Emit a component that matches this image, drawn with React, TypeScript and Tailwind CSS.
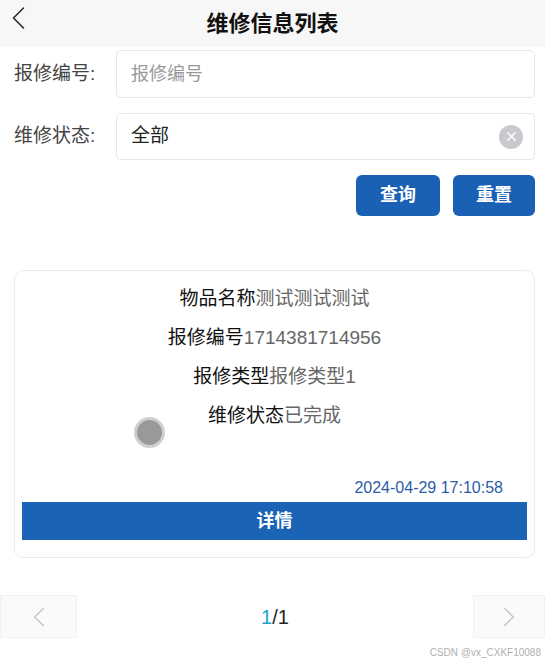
import React from 'react';

const font = { fontFamily: '"Liberation Sans", "Noto Sans CJK SC", sans-serif' };

const rows = [
  { label: '物品名称', value: '测试测试测试' },
  { label: '报修编号', value: '1714381714956' },
  { label: '报修类型', value: '报修类型1' },
  { label: '维修状态', value: '已完成' },
];

const Chevron: React.FC<{ dir: 'left' | 'right'; className?: string; width?: number }> = ({ dir, className, width = 1.6 }) => (
  <svg viewBox="0 0 14 24" className={className} fill="none" stroke="currentColor" strokeWidth={width} strokeLinecap="round" strokeLinejoin="round">
    {dir === 'left' ? <path d="M12 2 L2 12 L12 22" /> : <path d="M2 2 L12 12 L2 22" />}
  </svg>
);

const App: React.FC = () => {
  return (
    <div className="w-[545px] h-[666px] bg-white relative overflow-hidden text-[#333]" style={font}>
      {/* Header */}
      <div className="h-[47px] bg-[#f7f7f7] flex items-center relative">
        <button className="absolute left-[11px] top-[6px] text-[#222]">
          <Chevron dir="left" className="w-[15px] h-[24px]" width={1.5} />
        </button>
        <h1 className="flex-1 text-center text-[22px] font-bold leading-none text-[#111]">维修信息列表</h1>
      </div>

      {/* Search form */}
      <div className="pl-[14px] pr-[10px]">
        <div className="flex items-center mt-[3px]">
          <span className="w-[102px] text-[19px] text-[#444]">报修编号:</span>
          <div className="flex-1 h-[48px] border border-[#e6e6e6] rounded-[5px] flex items-center px-[14px]">
            <span className="text-[18px] text-[#999]">报修编号</span>
          </div>
        </div>
        <div className="flex items-center mt-[15px]">
          <span className="w-[102px] text-[19px] text-[#444]">维修状态:</span>
          <div className="flex-1 h-[47px] border border-[#e6e6e6] rounded-[5px] flex items-center pl-[14px] pr-[11px]">
            <span className="flex-1 text-[19px] text-[#222]">全部</span>
            <span className="w-[24px] h-[24px] rounded-full bg-[#c8c9cc] flex items-center justify-center">
              <svg viewBox="0 0 12 12" className="w-[11px] h-[11px]" stroke="white" strokeWidth={1.6} strokeLinecap="round">
                <path d="M2 2 L10 10 M10 2 L2 10" />
              </svg>
            </span>
          </div>
        </div>
        <div className="flex justify-end gap-[13px] mt-[15px]">
          <button className="w-[84px] h-[41px] rounded-[6px] bg-[#1a60b4] text-white text-[18px] font-bold">查询</button>
          <button className="w-[82px] h-[41px] rounded-[6px] bg-[#1a60b4] text-white text-[18px] font-bold">重置</button>
        </div>
      </div>

      {/* Card */}
      <div className="ml-[14px] mr-[10px] mt-[54px] h-[288px] border border-[#ececec] rounded-[9px] relative">
        <div className="pt-[16px] flex flex-col items-center gap-[16px]">
          {rows.map((r) => (
            <div key={r.label} className="text-[19px] leading-[23px]">
              <span className="text-[#111]">{r.label}</span>
              <span className="text-[#666]">{r.value}</span>
            </div>
          ))}
        </div>
        <span className="absolute left-[119px] top-[146px] w-[31px] h-[31px] rounded-full bg-[#999] border-[3px] border-[#cfcfcf]" />
        <div className="absolute right-[31px] top-[205px] text-[16px] text-[#2b5ca8]">2024-04-29 17:10:58</div>
        <button className="absolute left-[7px] right-[7px] top-[231px] h-[38px] bg-[#1a63b5] text-white text-[18px] font-bold">详情</button>
      </div>

      {/* Pagination */}
      <div className="flex items-center justify-between mt-[37px]">
        <button className="w-[77px] h-[43px] bg-[#fafafa] border border-[#f0f0f0] flex items-center justify-center text-[#c4c4c4]">
          <Chevron dir="left" className="w-[12px] h-[22px]" />
        </button>
        <div className="text-[20px]">
          <span className="text-[#1aa3c9]">1</span>
          <span className="text-[#222]">/1</span>
        </div>
        <button className="w-[72px] h-[43px] bg-[#fafafa] border border-[#f0f0f0] flex items-center justify-center text-[#c4c4c4]">
          <Chevron dir="right" className="w-[12px] h-[22px]" />
        </button>
      </div>

      <div className="absolute right-[4px] bottom-[6px] text-[10px] text-[#b0b0b0]">CSDN @vx_CXKF10088</div>
    </div>
  );
};

export default App;
